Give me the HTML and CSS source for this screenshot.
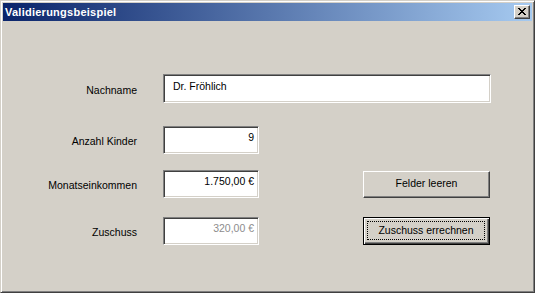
FILE: index.html
```html
<!DOCTYPE html>
<html lang="de">
<head>
<meta charset="utf-8">
<title>Validierungsbeispiel</title>
<link rel="stylesheet" href="styles.css">
</head>
<body>
<div class="window">
  <div class="titlebar">
    <span class="title">Validierungsbeispiel</span>
    <span class="close">
      <svg width="8" height="7" viewBox="0 0 8 7" shape-rendering="crispEdges">
        <path d="M0 0h2v1h-2zM6 0h2v1h-2zM1 1h2v1h-2zM5 1h2v1h-2zM2 2h4v1h-4zM3 3h2v1h-2zM2 4h4v1h-4zM1 5h2v1h-2zM5 5h2v1h-2zM0 6h2v1h-2zM6 6h2v1h-2z" fill="#000"/>
      </svg>
    </span>
  </div>
  <div class="client">
    <div class="row row1">
      <label class="lbl">Nachname</label>
      <div class="field wide left">Dr. Fröhlich</div>
    </div>
    <div class="row row2">
      <label class="lbl">Anzahl Kinder</label>
      <div class="field num">9</div>
    </div>
    <div class="row row3">
      <label class="lbl">Monatseinkommen</label>
      <div class="field num">1.750,00 €</div>
      <div class="btn">Felder leeren</div>
    </div>
    <div class="row row4">
      <label class="lbl">Zuschuss</label>
      <div class="field num disabled">320,00 €</div>
      <div class="btn default"><span class="focus">Zuschuss errechnen</span></div>
    </div>
  </div>
</div>
</body>
</html>
```

FILE: styles.css
```css
html, body {
  margin: 0;
  padding: 0;
  background: #d4d0c8;
}
body {
  font-family: "Liberation Sans", Arial, sans-serif;
  font-size: 10.5px;
  color: #000;
}
.window {
  box-sizing: border-box;
  width: 535px;
  height: 293px;
  background: #d4d0c8;
  border: 1px solid;
  border-color: #d4d0c8 #404040 #404040 #d4d0c8;
  box-shadow: inset 1px 1px #ffffff, inset -1px -1px #808080;
  padding: 2px;
  display: flex;
  flex-direction: column;
}
.titlebar {
  height: 18px;
  background: linear-gradient(to right, #0a246a, #a6caf0);
  display: flex;
  align-items: center;
  justify-content: space-between;
  padding: 0 2px 0 2px;
}
.title {
  color: #fff;
  font-weight: bold;
  font-size: 11px;
  letter-spacing: 0.25px;
  line-height: 13px;
}
.close {
  box-sizing: border-box;
  width: 16px;
  height: 14px;
  background: #d4d0c8;
  border: 1px solid;
  border-color: #fff #404040 #404040 #fff;
  box-shadow: inset -1px -1px #808080;
  display: flex;
  align-items: center;
  justify-content: center;
  padding: 0 1px 1px 0;
}
.close svg { display: block; }
.client {
  flex: 1;
  padding-top: 53px;
  display: flex;
  flex-direction: column;
}
.row {
  display: grid;
  grid-template-columns: 134px 26px 96px 104px 128px;
  align-items: center;
}
.row2 { margin-top: 23px; }
.row3 { margin-top: 16px; }
.row4 { margin-top: 19px; }
.lbl {
  grid-column: 1;
  text-align: right;
  padding-top: 2px;
}
.field {
  grid-column: 3;
  box-sizing: border-box;
  height: 28px;
  background: #fff;
  border: 1px solid;
  border-color: #808080 #fff #fff #808080;
  box-shadow: inset 1px 1px #404040, inset -1px -1px #d4d0c8;
  line-height: 13px;
  padding: 4px 4px 0 9px;
  white-space: nowrap;
}
.field.wide {
  grid-column: 3 / 6;
  height: 29px;
  padding-top: 5px;
}
.field.num { text-align: right; }
.field.disabled { color: #8d8d8d; }
.btn {
  grid-column: 5;
  box-sizing: border-box;
  width: 127px;
  height: 27px;
  background: #d4d0c8;
  border: 1px solid;
  border-color: #fff #404040 #404040 #fff;
  box-shadow: inset -1px -1px #808080;
  display: flex;
  align-items: center;
  justify-content: center;
  line-height: 13px;
  padding-bottom: 1px;
}
.btn.default {
  height: 28px;
  border: 1px solid #000;
  box-shadow: inset 1px 1px #fff, inset -1px -1px #404040, inset -2px -2px #808080;
  padding: 3px 4px 4px 3px;
}
.focus {
  box-sizing: border-box;
  flex: 1;
  align-self: stretch;
  border: 1px dotted #000;
  display: flex;
  align-items: center;
  justify-content: center;
}
```
